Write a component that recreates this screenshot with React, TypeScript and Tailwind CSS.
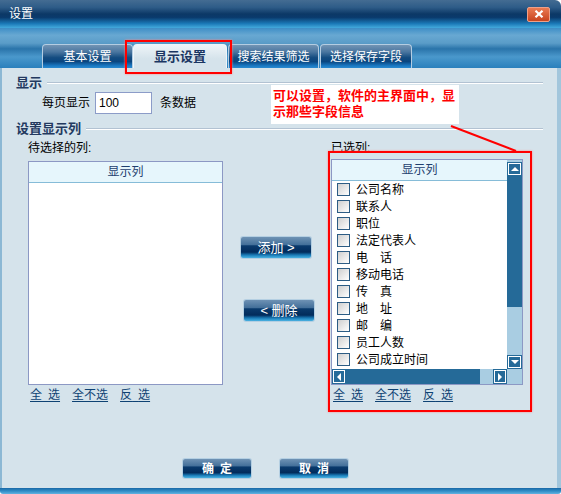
import React from 'react'

const SELECTED = [
  '公司名称',
  '联系人',
  '职位',
  '法定代表人',
  '电\u3000话',
  '移动电话',
  '传\u3000真',
  '地\u3000址',
  '邮\u3000编',
  '员工人数',
  '公司成立时间',
]

// ─── small pieces ────────────────────────────────────────────────────────────

function NavyButton({ label, className }: { label: string; className: string }) {
  return (
    <button
      className={`flex items-center justify-center rounded-[2px] text-white leading-none
        bg-[linear-gradient(to_bottom,#6e92b4_0%,#44709a_36%,#0a3a6c_42%,#022c5c_72%,#1a7cb8_86%,#4ab2e2_100%)]
        shadow-[0_0_0_1px_rgba(120,170,210,0.35)] ${className}`}
    >
      {label}
    </button>
  )
}

function Arrow({ dir }: { dir: 'up' | 'down' | 'left' | 'right' }) {
  const pts = {
    up: '1,6 5,2 9,6',
    down: '1,2 5,6 9,2',
    left: '6,0 2,4 6,8',
    right: '2,0 6,4 2,8',
  }[dir]
  const horiz = dir === 'left' || dir === 'right'
  return (
    <svg width={horiz ? 8 : 10} height={horiz ? 8 : 8} viewBox={horiz ? '0 0 8 8' : '0 0 10 8'}>
      <polygon points={pts} fill="#ffffff" />
    </svg>
  )
}

function ScrollButton({ dir, className }: { dir: 'up' | 'down' | 'left' | 'right'; className: string }) {
  return (
    <div className={`bg-[#256a98] p-[1px] ${className}`}>
      <div className="w-full h-full border border-white flex items-center justify-center">
        <Arrow dir={dir} />
      </div>
    </div>
  )
}

function Links() {
  return (
    <div className="flex gap-[12px] h-[12px] leading-[12px] text-[12px] text-[#0e4273]">
      <span className="underline underline-offset-[2px] cursor-pointer">全{'\u2002'}选</span>
      <span className="underline underline-offset-[2px] cursor-pointer">全不选</span>
      <span className="underline underline-offset-[2px] cursor-pointer">反{'\u2002'}选</span>
    </div>
  )
}

function SectionTitle({ label }: { label: string }) {
  return (
    <div className="h-[14px] flex items-center pl-[14px] pr-[14px]">
      <span className="text-[13px] leading-[14px] font-bold text-[#23395f]">{label}</span>
      <div className="flex-1 ml-[5px] border-t border-[#b2c2d2] border-b border-b-white" />
    </div>
  )
}

function ListHeader({ h }: { h: string }) {
  return (
    <div
      className={`${h} bg-[#e6f6fc] border-b border-[#86bcd8] flex items-center justify-center
        text-[12px] text-[#1e3e6e]`}
    >
      显示列
    </div>
  )
}

// ─── tabs ────────────────────────────────────────────────────────────────────

function Tab({ label, active, className }: { label: string; active?: boolean; className: string }) {
  if (active) {
    return (
      <div
        className={`h-[24px] rounded-t-[4px] border border-b-0 border-[#eef5fa]
          bg-[linear-gradient(to_bottom,#eef4f8_0%,#d5e3eb_60%)] flex items-center justify-center
          text-[13px] font-bold text-[#1a3662] ${className}`}
      >
        {label}
      </div>
    )
  }
  return (
    <div
      className={`h-[24px] rounded-t-[4px] border border-b-0 border-[#b4cde2]
        bg-[linear-gradient(to_bottom,#7294b4_0%,#4a76a0_30%,#144c80_55%,#0a4680_72%,#1a78c2_90%,#2a8ad0_100%)]
        flex items-center justify-center text-[12px] text-white ${className}`}
    >
      {label}
    </div>
  )
}

// ─── dialog ──────────────────────────────────────────────────────────────────

export default function App() {
  return (
    <div className="relative w-[561px] h-[494px] bg-white font-['Liberation_Sans','Noto_Sans_CJK_SC',sans-serif] text-[12px] text-black">
      <div className="flex flex-col w-full h-full rounded-tr-[6px] rounded-b-[3px] overflow-hidden">
        {/* Title bar */}
        <div
          className="h-[28px] shrink-0 flex items-center justify-between pl-[9px] pr-[11px]
            bg-[linear-gradient(to_bottom,#446c92_0%,#2e5c88_26%,#0c3866_50%,#0a3a6c_62%,#1a78b6_84%,#44aadc_100%)]"
        >
          <span className="text-white text-[12px] leading-none">设置</span>
          <div
            className="w-[23px] h-[15px] rounded-[2px] border border-[#eea088] flex items-center justify-center
              bg-[linear-gradient(to_bottom,#ea7a52,#c8441f)]"
          >
            <svg width="10" height="8" viewBox="0 0 10 8">
              <path d="M1.5 0.8 L8.5 7.2 M8.5 0.8 L1.5 7.2" stroke="#ffffff" strokeWidth="2.2" />
            </svg>
          </div>
        </div>

        {/* Tab strip */}
        <div
          className="h-[40px] shrink-0 flex items-end pl-[42px]
            bg-[linear-gradient(to_bottom,#3e8ec6_0%,#68a8d2_18%,#5a9cc8_38%,#2a74aa_52%,#4a98cc_72%,#2a80bc_100%)]"
        >
          <Tab label="基本设置" className="w-[91px]" />
          <Tab label="显示设置" active className="w-[94px]" />
          <Tab label="搜索结果筛选" className="w-[91px] ml-[1px]" />
          <Tab label="选择保存字段" className="w-[92px] ml-[1px]" />
        </div>

        {/* Body */}
        <div className="flex-1 flex flex-col bg-[#d5e3eb] border-l-2 border-r-4 border-l-[#8cb8d4] border-r-[#a2c6dc]">
          <div className="mt-[8px]">
            <SectionTitle label="显示" />
          </div>

          <div className="mt-[2px] h-[22px] flex items-center pl-[40px]">
            <span className="leading-none">每页显示</span>
            <div className="ml-[5px] w-[57px] h-[22px] border border-[#8c9cc8] bg-white flex items-center pl-[3px] leading-none">
              100
            </div>
            <span className="ml-[8px] leading-none">条数据</span>
          </div>

          <div className="mt-[8px]">
            <SectionTitle label="设置显示列" />
          </div>

          {/* Columns */}
          <div className="mt-[5px] flex pl-[26px]">
            {/* Available */}
            <div className="w-[195px] flex flex-col">
              <div className="h-[14px] leading-[14px]">待选择的列:</div>
              <div className="mt-[6px] h-[224px] border border-[#8c98c4] bg-white flex flex-col">
                <ListHeader h="h-[21px]" />
              </div>
              <div className="mt-[4px] pl-[2px]">
                <Links />
              </div>
            </div>

            {/* Move buttons */}
            <div className="w-[105px] flex flex-col pl-[18px] pt-[96px]">
              <NavyButton label="添加 >" className="w-[70px] h-[21px] text-[13px]" />
              <NavyButton label="< 删除" className="w-[70px] h-[21px] text-[13px] ml-[3px] mt-[42px]" />
            </div>

            {/* Selected */}
            <div className="w-[204px] flex flex-col">
              <div className="h-[14px] leading-[14px] pl-[3px]">已选列:</div>
              <div className="mt-[-4px] h-[261px] border-2 border-[#ff0000] shadow-[0_0_2px_#ff8a8a] pt-[6px] pl-[1px]">
                <div className="w-[192px] h-[226px] border border-[#8c98c4] bg-white flex flex-col">
                  <div className="flex-1 flex min-h-0">
                    <div className="flex-1 flex flex-col">
                      <ListHeader h="h-[21px]" />
                      {SELECTED.map((name) => (
                        <div key={name} className="h-[17px] flex items-center pl-[5px] gap-[6px]">
                          <span className="w-[13px] h-[13px] border border-[#2c5c84] bg-[linear-gradient(135deg,#cfcfcf,#ffffff)]" />
                          <span className="leading-none">{name}</span>
                        </div>
                      ))}
                    </div>
                    <div className="w-[15px] flex flex-col pt-[2px] bg-[#a9cde2]">
                      <ScrollButton dir="up" className="h-[14px]" />
                      <div className="h-[131px] bg-[#256a98]" />
                      <div className="flex-1" />
                      <ScrollButton dir="down" className="h-[14px]" />
                    </div>
                  </div>
                  <div className="h-[15px] flex">
                    <ScrollButton dir="left" className="w-[14px]" />
                    <div className="w-[134px] bg-[#256a98]" />
                    <div className="flex-1 bg-[#a9cde2]" />
                    <ScrollButton dir="right" className="w-[14px]" />
                    <div className="w-[15px] bg-[#a9cde2]" />
                  </div>
                </div>
                <div className="mt-[4px] pl-[2px]">
                  <Links />
                </div>
              </div>
            </div>
          </div>

          {/* OK / Cancel */}
          <div className="mt-[47px] flex pl-[181px] gap-[29px]">
            <NavyButton label={'确\u2002定'} className="w-[68px] h-[19px] text-[12px] font-bold" />
            <NavyButton label={'取\u2002消'} className="w-[68px] h-[19px] text-[12px] font-bold" />
          </div>
        </div>

        {/* Bottom frame */}
        <div className="h-[6px] shrink-0 bg-[linear-gradient(to_bottom,#1a68a6,#2f8cc6,#62b2e0)]" />
      </div>

      {/* Annotations */}
      <div className="absolute left-[125px] top-[40px] w-[107px] h-[34px] border-2 border-[#ff0000] shadow-[0_0_2px_#ff8a8a]" />
      <div className="absolute left-[271px] top-[85px] w-[188px] h-[39px] bg-white pl-[2px] pt-[3px] text-[13px] leading-[16px] font-bold text-[#ff0000] whitespace-nowrap">
        可以设置，软件的主界面中，显
        <br />
        示那些字段信息
      </div>
      <svg className="absolute left-0 top-0 pointer-events-none" width="561" height="494">
        <line x1="451" y1="126" x2="516" y2="151" stroke="#ff0000" strokeWidth="2" />
      </svg>
    </div>
  )
}
